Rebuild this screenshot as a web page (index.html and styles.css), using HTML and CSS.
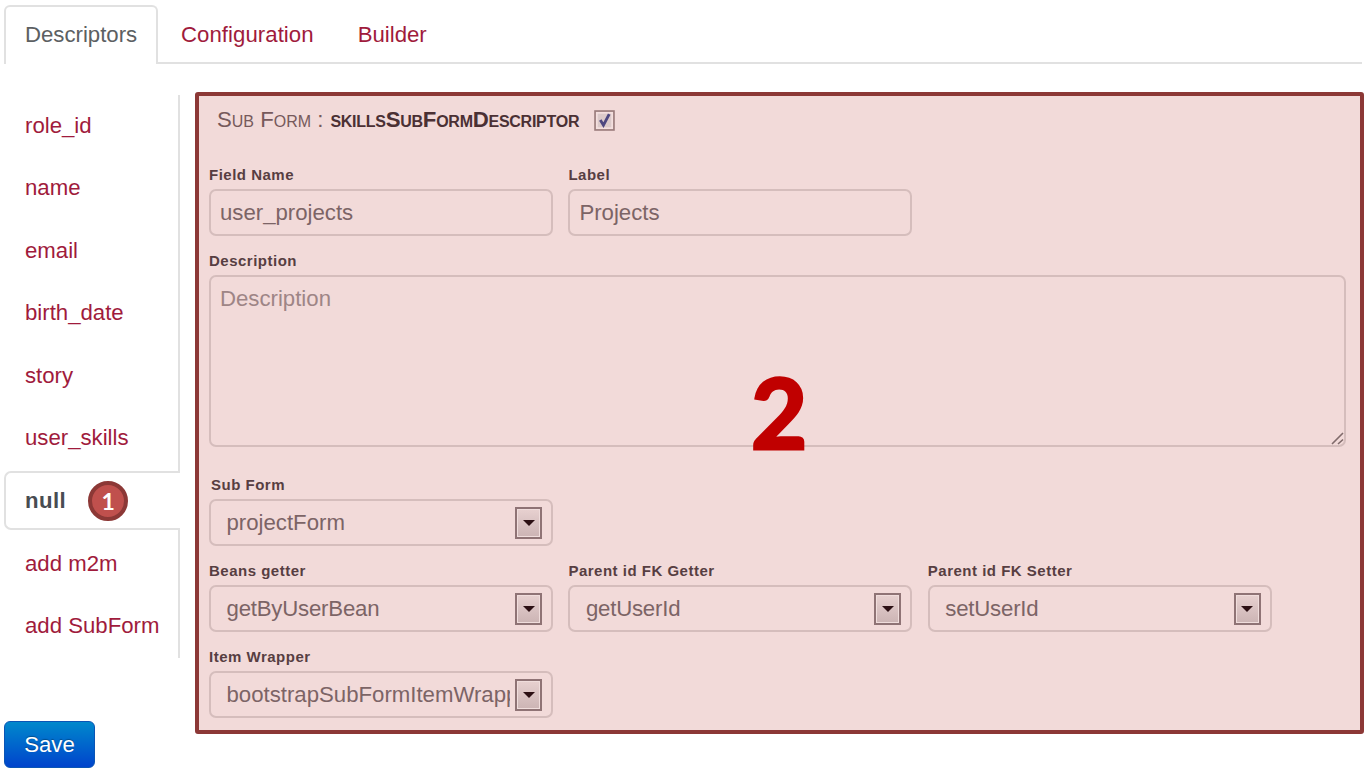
FILE: index.html
```html
<!DOCTYPE html>
<html lang="en">
<head>
<meta charset="utf-8">
<title>Descriptors</title>
<link rel="stylesheet" href="styles.css">
</head>
<body>
<nav class="tabs">
  <a class="tab active">Descriptors</a>
  <a class="tab configuration">Configuration</a>
  <a class="tab">Builder</a>
</nav>
<div class="main">
  <div class="side">
    <nav class="side-nav">
      <a class="item">role_id</a>
      <a class="item">name</a>
      <a class="item">email</a>
      <a class="item">birth_date</a>
      <a class="item">story</a>
      <a class="item">user_skills</a>
      <a class="item current">null <span class="step">1</span></a>
      <a class="item">add m2m</a>
      <a class="item">add SubForm</a>
    </nav>
    <button class="save">Save</button>
  </div>
  <section class="panel">
    <h1 class="title"><span class="kind">Sub Form :</span><b class="bean">skillsSubFormDescriptor</b>
      <svg class="check" viewBox="0 0 20 20"><rect x="1" y="1" width="18" height="18" fill="#f4dfde" stroke="#9a7c7c" stroke-width="1.6"/><rect x="3.5" y="3.5" width="13" height="13" fill="#dccaca"/><path d="M6 9.5 L9 14.5 L14.5 4" fill="none" stroke="#4d4780" stroke-width="2.7"/></svg>
    </h1>
    <div class="row">
      <div class="field"><label>Field Name</label><div class="control">user_projects</div></div>
      <div class="field"><label>Label</label><div class="control">Projects</div></div>
    </div>
    <div class="field wide"><label>Description</label>
      <div class="control area">Description<svg class="grip" viewBox="0 0 13 13"><path d="M1 12 L12 1 M7 12 L12 7.5" stroke="#806b6b" stroke-width="1.6"/></svg></div>
    </div>
    <div class="row">
      <div class="field"><label class="inset">Sub Form</label><div class="control select"><span class="value">projectForm</span><span class="arrow"></span></div></div>
    </div>
    <div class="row">
      <div class="field"><label>Beans getter</label><div class="control select"><span class="value tight">getByUserBean</span><span class="arrow"></span></div></div>
      <div class="field"><label>Parent id FK Getter</label><div class="control select"><span class="value tight">getUserId</span><span class="arrow"></span></div></div>
      <div class="field"><label>Parent id FK Setter</label><div class="control select"><span class="value tight">setUserId</span><span class="arrow"></span></div></div>
    </div>
    <div class="row">
      <div class="field"><label>Item Wrapper</label><div class="control select"><span class="value">bootstrapSubFormItemWrapper</span><span class="arrow"></span></div></div>
    </div>
    <span class="marker">2</span>
  </section>
</div>
</body>
</html>
```
FILE: styles.css
```css
* { box-sizing: border-box; }
body {
  margin: 0;
  height: 779px;
  overflow: hidden;
  background: #fff;
  color: #555;
  font: 22.2px/30px "Liberation Sans", Arial, sans-serif;
}
.tabs {
  display: flex;
  height: 64px;
  margin: 0 2px 0 4px;
  padding-top: 5px;
  background: linear-gradient(#e1e1e1, #e1e1e1) bottom / 100% 2px no-repeat;
}
.tab { padding: 15px 22px 0; color: #a01b3c; }
.tab.active {
  width: 154px;
  padding: 13px 19px 0;
  background: #fff;
  border: 2px solid #e1e1e1;
  border-bottom: 0;
  border-radius: 6px 6px 0 0;
  color: #5c6062;
}
.tab.configuration { padding-left: 23px; letter-spacing: .05px; }
.main { display: flex; padding-top: 28px; }
.side { width: 195px; padding: 3px 0 0 4px; }
.side-nav {
  display: flex;
  flex-direction: column;
  gap: 3.6px;
  width: 176px;
  height: 563px;
  background: linear-gradient(#e1e1e1, #e1e1e1) right / 2px 100% no-repeat;
}
.item {
  height: 59px;
  flex: none;
  padding: 15.5px 0 0 21px;
  color: #a01b3c;
  white-space: nowrap;
}
.item.current {
  display: flex;
  align-items: center;
  padding: 1px 0 0 19px;
  background: #fff;
  border: 2px solid #e1e1e1;
  border-right: 0;
  border-radius: 7px 0 0 7px;
  color: #484c52;
  font-weight: bold;
  letter-spacing: .4px;
}
.step {
  width: 40px;
  height: 40px;
  margin: 1px 0 0 22px;
  border: 4px solid #8c3836;
  border-radius: 50%;
  background: #c0504d;
  color: #fff;
  font: bold 23px/32px Lato, sans-serif;
  letter-spacing: 0;
  text-align: center;
}
.save {
  display: block;
  width: 91px;
  height: 47px;
  margin: 63px 0 0;
  padding: 0;
  border: 1px solid #0a55b5;
  border-radius: 6px;
  background: linear-gradient(#0088cc, #0044cc);
  color: #fff;
  font: 22.2px/44px "Liberation Sans", Arial, sans-serif;
  text-shadow: 0 -1px 1px rgba(0, 0, 0, .3);
}
.panel {
  position: relative;
  width: 1169px;
  height: 642px;
  padding: 9px 10px;
  border: 4px solid #8c3836;
  border-radius: 3px;
  background: #f2dad9;
}
.title {
  display: flex;
  align-items: center;
  height: 30px;
  margin: 0 0 30px 8px;
  color: #76595b;
  font-size: 22.2px;
  font-weight: normal;
  font-variant: small-caps;
}
.bean { margin-left: 7px; color: #4b3034; letter-spacing: -.26px; }
.check { width: 21px; height: 21px; margin-left: 15px; }
.row { display: grid; grid-template-columns: repeat(3, 344px); gap: 15.4px; margin-bottom: 14px; }
.field label {
  display: block;
  height: 24px;
  color: #573e42;
  font-size: 15px;
  font-weight: bold;
  line-height: 20px;
  letter-spacing: .5px;
}
.row, .wide { margin-bottom: 15px; }
.field .inset { padding-left: 2px; }
.control {
  position: relative;
  height: 47px;
  padding: 7px 9px;
  border: 2px solid #d5bdbc;
  border-radius: 7px;
  color: #7c6466;
  white-space: nowrap;
}
.wide { width: 1137px; margin-bottom: 28px; }
.area { height: 172px; color: #9e8586; }
.grip { position: absolute; right: 0; bottom: 0; width: 13px; height: 13px; }
.select { display: flex; align-items: center; padding: 0 9px 0 15.5px; }
.value { flex: 1; overflow: hidden; margin-right: 5px; }
.value.tight { letter-spacing: -.2px; }
.arrow {
  display: flex;
  align-items: center;
  justify-content: center;
  width: 27px;
  height: 32px;
  border: 2px solid #8f7375;
  background: linear-gradient(#e8d1d0, #d9c2c2 50%, #ccb4b4);
  box-shadow: inset 0 0 0 1px #f0dddc;
}
.arrow::before {
  content: "";
  border: 6px solid transparent;
  border-top: 6px solid #2c1014;
  border-bottom: 0;
}
.marker {
  position: absolute;
  left: 552px;
  top: 256px;
  color: #c00000;
  font: bold 97px/120px Lato, sans-serif;
  -webkit-text-stroke: 3px #c00000;
  stroke-linejoin: round;
}
```
